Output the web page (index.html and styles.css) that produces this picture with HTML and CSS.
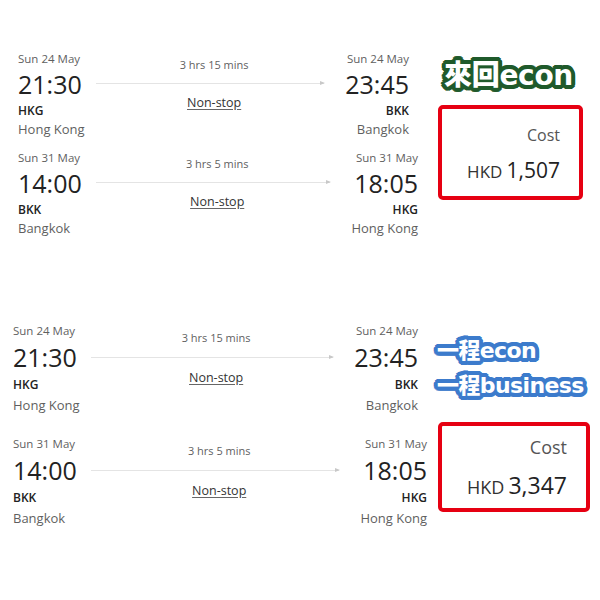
FILE: index.html
```html
<!DOCTYPE html>
<html lang="zh-Hant">
<head>
<meta charset="utf-8">
<title>Flights</title>
<link rel="stylesheet" href="styles.css">
</head>
<body>
<section class="trip trip-a">
  <div class="flights">
    <div class="flight row-1">
      <div class="end">
        <div class="date">Sun 24 May</div>
        <div class="time">21:30</div>
        <div class="code">HKG</div>
        <div class="city">Hong Kong</div>
      </div>
      <div class="mid">
        <div class="dur">3 hrs 15 mins</div>
        <div class="track"></div>
        <div class="stops"><span>Non-stop</span></div>
      </div>
      <div class="end end-r">
        <div class="date">Sun 24 May</div>
        <div class="time">23:45</div>
        <div class="code">BKK</div>
        <div class="city">Bangkok</div>
      </div>
    </div>
    <div class="flight row-2">
      <div class="end">
        <div class="date">Sun 31 May</div>
        <div class="time">14:00</div>
        <div class="code">BKK</div>
        <div class="city">Bangkok</div>
      </div>
      <div class="mid">
        <div class="dur">3 hrs 5 mins</div>
        <div class="track"></div>
        <div class="stops"><span>Non-stop</span></div>
      </div>
      <div class="end end-r">
        <div class="date">Sun 31 May</div>
        <div class="time">18:05</div>
        <div class="code">HKG</div>
        <div class="city">Hong Kong</div>
      </div>
    </div>
  </div>
  <aside class="notes">
    <div class="tag tag-green">來回econ</div>
    <div class="cost">
      <div class="cost-label">Cost</div>
      <div class="cost-value"><span class="cur">HKD</span> <span class="amt">1,507</span></div>
    </div>
  </aside>
</section>

<section class="trip trip-b">
  <div class="flights">
    <div class="flight row-1">
      <div class="end">
        <div class="date">Sun 24 May</div>
        <div class="time">21:30</div>
        <div class="code">HKG</div>
        <div class="city">Hong Kong</div>
      </div>
      <div class="mid">
        <div class="dur">3 hrs 15 mins</div>
        <div class="track"></div>
        <div class="stops"><span>Non-stop</span></div>
      </div>
      <div class="end end-r">
        <div class="date">Sun 24 May</div>
        <div class="time">23:45</div>
        <div class="code">BKK</div>
        <div class="city">Bangkok</div>
      </div>
    </div>
    <div class="flight row-2">
      <div class="end">
        <div class="date">Sun 31 May</div>
        <div class="time">14:00</div>
        <div class="code">BKK</div>
        <div class="city">Bangkok</div>
      </div>
      <div class="mid">
        <div class="dur">3 hrs 5 mins</div>
        <div class="track"></div>
        <div class="stops"><span>Non-stop</span></div>
      </div>
      <div class="end end-r">
        <div class="date">Sun 31 May</div>
        <div class="time">18:05</div>
        <div class="code">HKG</div>
        <div class="city">Hong Kong</div>
      </div>
    </div>
  </div>
  <aside class="notes">
    <div class="tag tag-blue">一程econ</div>
    <div class="tag tag-blue tag-2">一程business</div>
    <div class="cost">
      <div class="cost-label">Cost</div>
      <div class="cost-value"><span class="cur">HKD</span> <span class="amt">3,347</span></div>
    </div>
  </aside>
</section>
</body>
</html>
```
FILE: styles.css
```css
html, body {
  margin: 0;
  padding: 0;
  background: #fff;
}
body {
  width: 600px;
  height: 600px;
  font-family: "Open Sans", "Noto Sans", sans-serif;
  color: #222;
}

.trip {
  display: flex;
  align-items: flex-start;
}
.trip-a {
  padding-top: 51px;
  padding-left: 18px;
}
.trip-b {
  margin-top: 86px;
  padding-left: 13px;
}

.flights {
  display: flex;
  flex-direction: column;
}
.trip-a .flights { gap: 12px; }
.trip-b .flights { gap: 21px; }

.flight {
  display: grid;
  grid-template-columns: 78px 1fr auto;
}
.trip-a .row-1 { width: 391px; }
.trip-a .row-2 { width: 400px; }
.trip-b .row-1 { width: 405px; }
.trip-b .row-2 { width: 414px; }

.end { display: flex; flex-direction: column; }
.end-r { text-align: right; }

.date {
  font-size: 11.5px;
  line-height: 16px;
  color: #5f5f5f;
}
.time {
  font-size: 25px;
  line-height: 34px;
  color: #222;
}
.code {
  font-size: 12px;
  line-height: 20px;
  font-weight: 600;
  color: #222;
}
.city {
  font-size: 13px;
  line-height: 17px;
  color: #5f5f5f;
}
.trip-b .time { line-height: 36px; }
.trip-b .city { line-height: 20px; }

.mid {
  padding-top: 6px;
  padding-right: 21px;
  text-align: center;
}
.trip-b .mid { padding-top: 7px; }

.dur {
  font-size: 11px;
  line-height: 16px;
  color: #5f5f5f;
  padding-left: 8px;
}
.track {
  position: relative;
  height: 1px;
  background: #e4e4e4;
  margin-top: 10px;
}
.trip-b .track { margin-top: 11px; }
.track::after {
  content: "";
  position: absolute;
  right: -1px;
  top: -2px;
  border-left: 5px solid #c8c8c8;
  border-top: 2.5px solid transparent;
  border-bottom: 2.5px solid transparent;
}
.stops {
  margin-top: 10px;
  padding-left: 8px;
  font-size: 12.5px;
  line-height: 18px;
  color: #333;
}
.trip-b .stops { margin-top: 11px; }
.stops span {
  text-decoration: underline;
  text-underline-offset: 2px;
  text-decoration-color: #666;
}

.notes {
  display: flex;
  flex-direction: column;
  align-items: flex-start;
}
.trip-a .notes {
  margin-left: 20px;
  padding-top: 8px;
}
.trip-b .notes {
  margin-left: 11px;
  padding-top: 14px;
}

.tag {
  font-family: "DejaVu Sans", "Noto Sans CJK TC", sans-serif;
  font-weight: 900;
  color: #fff;
  white-space: nowrap;
  text-shadow:
    4px 0 var(--o), 3.7px 1.5px var(--o), 2.8px 2.8px var(--o), 1.5px 3.7px var(--o),
    0 4px var(--o), -1.5px 3.7px var(--o), -2.8px 2.8px var(--o), -3.7px 1.5px var(--o),
    -4px 0 var(--o), -3.7px -1.5px var(--o), -2.8px -2.8px var(--o), -1.5px -3.7px var(--o),
    0 -4px var(--o), 1.5px -3.7px var(--o), 2.8px -2.8px var(--o), 3.7px -1.5px var(--o),
    2px 0 var(--o), -2px 0 var(--o), 0 2px var(--o), 0 -2px var(--o);
}
.tag-green {
  --o: #1f5a2b;
  font-size: 28px;
  line-height: 34px;
  margin-left: 6px;
  letter-spacing: -0.3px;
}
.tag-blue {
  --o: #3c7bcc;
  font-size: 22px;
  line-height: 28px;
  margin-left: -1px;
  letter-spacing: -0.6px;
}
.tag-2 { margin-top: 7px; }

.cost {
  box-sizing: border-box;
  border: 4px solid #e60012;
  border-radius: 5px;
  text-align: right;
  color: #333;
}
.trip-a .cost {
  width: 145px;
  height: 95px;
  margin-top: 12px;
  padding: 15px 19px 0 0;
}
.trip-b .cost {
  width: 152px;
  height: 90px;
  margin-top: 22px;
  padding: 10px 19px 0 0;
}
.cost-label {
  font-size: 16px;
  line-height: 22px;
  color: #555;
}
.cost-value {
  margin-top: 9px;
  line-height: 30px;
  white-space: nowrap;
}
.cur { font-size: 17px; color: #333; }
.amt { font-size: 21px; color: #222; }
.trip-b .cost-label { font-size: 18px; }
.trip-b .cost-value { margin-top: 12px; }
.trip-b .cur { font-size: 18px; }
.trip-b .amt { font-size: 23px; }
```
